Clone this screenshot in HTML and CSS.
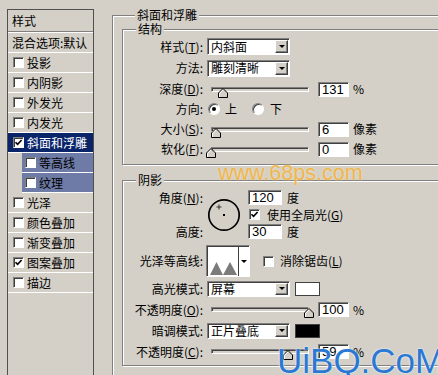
FILE: index.html
```html
<!DOCTYPE html>
<html lang="zh-CN">
  <head>
    <meta charset="UTF-8" />
    <title>图层样式</title>
    <link rel="stylesheet" href="styles.css">
  </head>
  <body>
    <div class="dialog">
      <!-- 左侧样式列表 ================================ -->
      <ul class="style-list">
        <li class="list-head">样式</li>
        <li class="list-blend">混合选项:默认</li>
        <li><span class="chk"></span>投影</li>
        <li><span class="chk"></span>内阴影</li>
        <li><span class="chk"></span>外发光</li>
        <li><span class="chk"></span>内发光</li>
        <li class="active"><span class="chk"><svg viewBox="0 0 9 9"><path d="M1.5 4.2 3.6 6.4 7.6 2" /></svg></span>斜面和浮雕</li>
        <li class="sub"><span class="chk"></span>等高线</li>
        <li class="sub"><span class="chk"></span>纹理</li>
        <li><span class="chk"></span>光泽</li>
        <li><span class="chk"></span>颜色叠加</li>
        <li><span class="chk"></span>渐变叠加</li>
        <li><span class="chk"><svg viewBox="0 0 9 9"><path d="M1.5 4.2 3.6 6.4 7.6 2" /></svg></span>图案叠加</li>
        <li><span class="chk"></span>描边</li>
      </ul>

      <!-- 右侧参数 ==================================== -->
      <div class="panel">
        <fieldset class="group outer">
          <legend>斜面和浮雕</legend>

          <fieldset class="group inner struct">
            <legend>结构</legend>
            <div class="row first">
              <span class="label">样式(<u>T</u>):</span>
              <span class="select"><span class="value">内斜面</span><span class="drop"></span></span>
            </div>
            <div class="row second">
              <span class="label">方法:</span>
              <span class="select"><span class="value">雕刻清晰</span><span class="drop"></span></span>
            </div>
            <div class="row">
              <span class="label">深度(<u>D</u>):</span>
              <span class="slider"><svg class="thumb" style="left: 11px" viewBox="0 0 10 10"><polygon points="5,0.5 9.5,5 9.5,9.5 0.5,9.5 0.5,5" /><polyline points="1.5,9 1.5,5.4 5,1.9" /></svg></span>
              <span class="field">131</span>
              <span class="unit">%</span>
            </div>
            <div class="row">
              <span class="label">方向:</span>
              <span class="radio on"></span><span class="opt">上</span>
              <span class="radio second-radio"></span><span class="opt opt-down">下</span>
            </div>
            <div class="row">
              <span class="label">大小(<u>S</u>):</span>
              <span class="slider"><svg class="thumb" style="left: 4px" viewBox="0 0 10 10"><polygon points="5,0.5 9.5,5 9.5,9.5 0.5,9.5 0.5,5" /><polyline points="1.5,9 1.5,5.4 5,1.9" /></svg></span>
              <span class="field">6</span>
              <span class="unit">像素</span>
            </div>
            <div class="row">
              <span class="label">软化(<u>F</u>):</span>
              <span class="slider"><svg class="thumb" style="left: -1px" viewBox="0 0 10 10"><polygon points="5,0.5 9.5,5 9.5,9.5 0.5,9.5 0.5,5" /><polyline points="1.5,9 1.5,5.4 5,1.9" /></svg></span>
              <span class="field">0</span>
              <span class="unit">像素</span>
            </div>
          </fieldset>

          <fieldset class="group inner shade">
            <legend>阴影</legend>
            <div class="angle">
              <span class="label">角度(<u>N</u>):</span>
              <svg class="dial" viewBox="0 0 34 34">
                <circle cx="17" cy="17" r="15.2" />
                <rect x="16" y="16" width="2" height="2" />
                <path d="M12 6.5v5M9.5 9h5" />
              </svg>
              <span class="cell"><span class="field">120</span><span class="unit">度</span></span>
              <span class="cell global"><span class="chk"><svg viewBox="0 0 9 9"><path d="M1.5 4.2 3.6 6.4 7.6 2" /></svg></span><span>使用全局光(<u>G</u>)</span></span>
              <span class="label">高度:</span>
              <span class="cell"><span class="field">30</span><span class="unit">度</span></span>
            </div>

            <div class="row contour-row">
              <span class="label">光泽等高线:</span>
              <span class="contour">
                <svg class="curve" viewBox="0 0 30 28"><polygon points="2,27 8.5,14 15,27" /><polygon points="15,27 22,14 29,27" /></svg>
                <span class="contour-drop"></span>
              </span>
              <span class="chk aa"></span><span class="aa-text">消除锯齿(<u>L</u>)</span>
            </div>

            <div class="row mode first-mode">
              <span class="label">高光模式:</span>
              <span class="select small"><span class="value">屏幕</span><span class="drop"></span></span>
              <span class="swatch"></span>
            </div>
            <div class="row mode">
              <span class="label">不透明度(<u>O</u>):</span>
              <span class="slider"><svg class="thumb" style="left: 97px" viewBox="0 0 10 10"><polygon points="5,0.5 9.5,5 9.5,9.5 0.5,9.5 0.5,5" /><polyline points="1.5,9 1.5,5.4 5,1.9" /></svg></span>
              <span class="field">100</span>
              <span class="unit">%</span>
            </div>
            <div class="row mode">
              <span class="label">暗调模式:</span>
              <span class="select small"><span class="value">正片叠底</span><span class="drop"></span></span>
              <span class="swatch dark"></span>
            </div>
            <div class="row mode">
              <span class="label">不透明度(<u>C</u>):</span>
              <span class="slider"><svg class="thumb" style="left: 76px" viewBox="0 0 10 10"><polygon points="5,0.5 9.5,5 9.5,9.5 0.5,9.5 0.5,5" /><polyline points="1.5,9 1.5,5.4 5,1.9" /></svg></span>
              <span class="field">59</span>
              <span class="unit">%</span>
            </div>
          </fieldset>
        </fieldset>
      </div>

      <!-- 水印 -->
      <div class="mark-68">www.68ps.com</div>
      <div class="mark-uibq">UiBQ.CoM</div>
    </div>
  </body>
</html>
```

FILE: styles.css
```css
body {
  margin: 0;
  width: 438px;
  height: 375px;
  overflow: hidden;
  background-color: #d4d0c8;
  color: #000;
  font-family: "Noto Sans CJK SC", "Liberation Sans", sans-serif;
  font-size: 12px;
  line-height: 14px;
}
u {
  text-decoration: underline;
}
.dialog {
  position: relative;
  display: flex;
  align-items: flex-start;
  height: 375px;
}

/* 样式列表 */
.style-list {
  flex: none;
  list-style: none;
  margin: 9px 0 0 7px;
  padding: 0;
  width: 85px;
  height: 400px;
  border: 1px solid #505050;
}
.style-list li {
  display: flex;
  align-items: center;
  gap: 3px;
  height: 19px;
  padding-left: 5px;
  border-bottom: 1px solid #fff;
  white-space: nowrap;
}
.style-list .list-head {
  height: 21px;
  padding-left: 4px;
  border-bottom: 1px solid #808080;
}
.style-list .list-blend {
  padding-left: 4px;
  border-top: 1px solid #fff;
}
.style-list .active {
  background-color: #0a246a;
  color: #fff;
}
.style-list .sub {
  margin-left: 14px;
  padding-left: 3px;
  background-color: #6d7ba6;
}

/* 复选框 / 单选 */
.chk {
  flex: none;
  display: inline-flex;
  align-items: center;
  justify-content: center;
  width: 11px;
  height: 11px;
  box-sizing: border-box;
  background-color: #fff;
  border: 1px solid;
  border-color: #808080 #fff #fff #808080;
  box-shadow: inset 1px 1px 0 #404040;
}
.chk svg {
  width: 9px;
  height: 9px;
}
.chk path {
  fill: none;
  stroke: #000;
  stroke-width: 1.6;
}
.radio {
  flex: none;
  position: relative;
  width: 12px;
  height: 12px;
  box-sizing: border-box;
  margin-left: 1px;
  border-radius: 50%;
  background-color: #fff;
  border: 1px solid;
  border-color: #808080 #fff #fff #808080;
  box-shadow: inset 1px 1px 0 #404040;
}
.radio.on::after {
  content: "";
  position: absolute;
  left: 3px;
  top: 3px;
  width: 4px;
  height: 4px;
  border-radius: 50%;
  background-color: #000;
}
.opt {
  margin-left: 5px;
}
.second-radio {
  margin-left: 15px;
}
.opt-down {
  margin-left: 6px;
}

/* 分组框 */
.panel {
  flex: none;
  margin-left: 18px;
  padding-top: 8px;
}
.group {
  margin: 0;
  padding: 0;
  min-width: 0;
  box-sizing: border-box;
  border: 1px solid #808080;
  box-shadow: inset 1px 1px 0 #fff, 1px 1px 0 #fff;
}
.group legend {
  margin-left: 13px;
  padding: 0 2px;
  line-height: 14px;
  background-color: #d4d0c8;
}
.outer {
  width: 360px;
  height: 400px;
  padding-left: 9px;
}
.inner {
  width: 340px;
}
.struct {
  padding-bottom: 5px;
}
.shade {
  margin-top: 8px;
  padding-top: 2px;
  padding-bottom: 3px;
}

/* 行 */
.row {
  display: flex;
  align-items: center;
  height: 20px;
  white-space: nowrap;
}
.row.first {
  height: 21px;
}
.row.second {
  height: 22px;
}
.label {
  flex: none;
  width: 80px;
  margin-right: 4px;
  text-align: right;
  white-space: nowrap;
}

/* 下拉框 */
.select {
  flex: none;
  display: flex;
  align-items: center;
  width: 83px;
  height: 17px;
  box-sizing: border-box;
  padding: 1px 1px 1px 2px;
  background-color: #fff;
  border: 1px solid;
  border-color: #808080 #fff #fff #808080;
  box-shadow: inset 1px 1px 0 #404040;
}
.select.small {
  height: 16px;
}
.select .value {
  flex: 1;
  padding-left: 1px;
}
.drop {
  display: flex;
  align-items: center;
  justify-content: center;
  width: 13px;
  height: 13px;
  box-sizing: border-box;
  background-color: #d4d0c8;
  border: 1px solid;
  border-color: #fff #404040 #404040 #fff;
  box-shadow: inset -1px -1px 0 #808080;
}
.select.small .drop {
  height: 12px;
}
.drop::after {
  content: "";
  border-left: 3px solid transparent;
  border-right: 3px solid transparent;
  border-top: 3px solid #000;
}

/* 滑块 */
.slider {
  flex: none;
  position: relative;
  width: 98px;
  height: 5px;
  margin-left: 4px;
  box-sizing: border-box;
  background-color: #d4d0c8;
  border: 1px solid;
  border-color: #808080 #fff #fff #808080;
  box-shadow: inset 1px 1px 0 #404040;
}
.thumb {
  position: absolute;
  top: 0;
  width: 10px;
  height: 10px;
  margin-left: -5px;
}
.thumb polygon {
  fill: #d4d0c8;
  stroke: #000;
  stroke-width: 1;
}
.thumb polyline {
  fill: none;
  stroke: #fff;
  stroke-width: 1;
}

/* 输入框 */
.field {
  flex: none;
  width: 31px;
  height: 15px;
  box-sizing: border-box;
  margin-left: 9px;
  padding-left: 3px;
  background-color: #fff;
  border: 1px solid;
  border-color: #808080 #fff #fff #808080;
  box-shadow: inset 1px 1px 0 #404040;
  font-family: "Liberation Sans", sans-serif;
  font-size: 13px;
  line-height: 13px;
}
.unit {
  margin-left: 4px;
}

/* 角度 */
.angle {
  display: grid;
  grid-template-columns: 84px 40px auto;
  grid-template-rows: 17px 17px 17px;
  align-items: center;
}
.angle .label {
  width: 80px;
}
.angle .label:nth-of-type(2) {
  grid-row: 3;
  grid-column: 1;
}
.dial {
  grid-row: 1 / 4;
  grid-column: 2;
  width: 34px;
  height: 34px;
}
.dial circle {
  fill: none;
  stroke: #000;
  stroke-width: 1.7;
}
.dial path {
  stroke: #303030;
  stroke-width: 1;
}
.cell {
  display: flex;
  align-items: center;
  grid-column: 3;
  white-space: nowrap;
}
.angle .field {
  width: 34px;
  margin-left: 1px;
}
.angle .unit {
  margin-left: 5px;
}
.global {
  gap: 7px;
  padding-left: 2px;
}

/* 等高线 */
.row.contour-row {
  height: 32px;
  margin-top: 5px;
}
.contour {
  flex: none;
  display: flex;
  width: 44px;
  height: 32px;
  margin-left: -1px;
  box-sizing: border-box;
  background-color: #fff;
  border: 1px solid;
  border-color: #808080 #fff #fff #808080;
  box-shadow: inset 1px 1px 0 #404040;
}
.curve {
  width: 30px;
  height: 28px;
  margin: 2px 0 0 1px;
}
.curve polygon {
  fill: #7b7b7b;
}
.contour-drop {
  display: flex;
  align-items: center;
  justify-content: center;
  flex: 1;
  border-left: 1px solid #404040;
}
.contour-drop::after {
  content: "";
  border-left: 3px solid transparent;
  border-right: 3px solid transparent;
  border-top: 3px solid #000;
}
.chk.aa {
  margin-left: 13px;
}
.aa-text {
  margin-left: 6px;
}

/* 模式 */
.row.mode {
  height: 21px;
}
.row.first-mode {
  margin-top: 1px;
}
.swatch {
  flex: none;
  width: 25px;
  height: 14px;
  margin-left: 5px;
  box-sizing: border-box;
  background-color: #fff;
  border: 1px solid #404040;
}
.swatch.dark {
  background-color: #000;
}

/* 水印 */
.mark-68 {
  position: absolute;
  left: 218px;
  top: 163px;
  font-family: "Liberation Sans", sans-serif;
  font-size: 21.5px;
  line-height: 21px;
  color: #f1b443;
  opacity: 0.9;
  text-shadow: 0 0 2px #fbe6bd;
}
.mark-uibq {
  position: absolute;
  left: 277px;
  top: 343px;
  font-family: "Liberation Sans", sans-serif;
  font-size: 35px;
  line-height: 35px;
  color: #2b78d2;
  text-shadow: 0 0 1px #fff, 0 0 2px #e8f0fa;
}
```
